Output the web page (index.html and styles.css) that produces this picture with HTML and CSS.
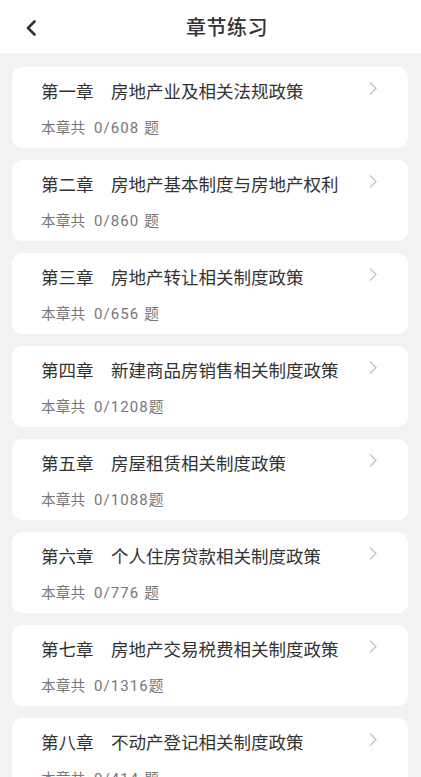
FILE: index.html
```html
<!DOCTYPE html>
<html lang="zh-CN">
<head>
<meta charset="utf-8">
<title>章节练习</title>
<link rel="stylesheet" href="styles.css">
</head>
<body>
<header class="header">
  <div class="back">
    <svg width="12" height="16" viewBox="0 0 12 16"><path d="M9.5 1.5 L3 8 L9.5 14.5" fill="none" stroke="#333" stroke-width="2.6" stroke-linecap="round" stroke-linejoin="round"/></svg>
  </div>
  <h1 class="title">章节练习</h1>
</header>
<main class="list">
  <div class="card"><div class="name">第一章　房地产业及相关法规政策</div><div class="count">本章共<span class="num"> 0/608 </span>题</div><svg class="chev" width="10" height="15" viewBox="0 0 10 15"><path d="M2 1.5 L8 7.5 L2 13.5" fill="none" stroke="#c2c2c2" stroke-width="1.3"/></svg></div>
  <div class="card"><div class="name">第二章　房地产基本制度与房地产权利</div><div class="count">本章共<span class="num"> 0/860 </span>题</div><svg class="chev" width="10" height="15" viewBox="0 0 10 15"><path d="M2 1.5 L8 7.5 L2 13.5" fill="none" stroke="#c2c2c2" stroke-width="1.3"/></svg></div>
  <div class="card"><div class="name">第三章　房地产转让相关制度政策</div><div class="count">本章共<span class="num"> 0/656 </span>题</div><svg class="chev" width="10" height="15" viewBox="0 0 10 15"><path d="M2 1.5 L8 7.5 L2 13.5" fill="none" stroke="#c2c2c2" stroke-width="1.3"/></svg></div>
  <div class="card"><div class="name">第四章　新建商品房销售相关制度政策</div><div class="count">本章共<span class="num"> 0/1208</span>题</div><svg class="chev" width="10" height="15" viewBox="0 0 10 15"><path d="M2 1.5 L8 7.5 L2 13.5" fill="none" stroke="#c2c2c2" stroke-width="1.3"/></svg></div>
  <div class="card"><div class="name">第五章　房屋租赁相关制度政策</div><div class="count">本章共<span class="num"> 0/1088</span>题</div><svg class="chev" width="10" height="15" viewBox="0 0 10 15"><path d="M2 1.5 L8 7.5 L2 13.5" fill="none" stroke="#c2c2c2" stroke-width="1.3"/></svg></div>
  <div class="card"><div class="name">第六章　个人住房贷款相关制度政策</div><div class="count">本章共<span class="num"> 0/776 </span>题</div><svg class="chev" width="10" height="15" viewBox="0 0 10 15"><path d="M2 1.5 L8 7.5 L2 13.5" fill="none" stroke="#c2c2c2" stroke-width="1.3"/></svg></div>
  <div class="card"><div class="name">第七章　房地产交易税费相关制度政策</div><div class="count">本章共<span class="num"> 0/1316</span>题</div><svg class="chev" width="10" height="15" viewBox="0 0 10 15"><path d="M2 1.5 L8 7.5 L2 13.5" fill="none" stroke="#c2c2c2" stroke-width="1.3"/></svg></div>
  <div class="card"><div class="name">第八章　不动产登记相关制度政策</div><div class="count">本章共<span class="num"> 0/414 </span>题</div><svg class="chev" width="10" height="15" viewBox="0 0 10 15"><path d="M2 1.5 L8 7.5 L2 13.5" fill="none" stroke="#c2c2c2" stroke-width="1.3"/></svg></div>
</main>
</body>
</html>
```
FILE: styles.css
```css
html, body {
  margin: 0;
  padding: 0;
}
body {
  background: #f2f2f2;
  font-family: "Noto Sans CJK SC", "Noto Sans", sans-serif;
  width: 421px;
  height: 777px;
  overflow: hidden;
}
.header {
  height: 53px;
  background: #fff;
  display: flex;
  align-items: center;
}
.back {
  width: 12px;
  height: 16px;
  margin-left: 25px;
  margin-top: 2px;
  display: flex;
}
.title {
  margin: 0 0 0 149px;
  font-size: 20px;
  font-weight: 500;
  color: #333;
  line-height: 28px;
  letter-spacing: 0.5px;
}
.list {
  display: flex;
  flex-direction: column;
  gap: 12px;
  padding: 14px 13px 0 12px;
}
.card {
  position: relative;
  background: #fff;
  border-radius: 10px;
  height: 81px;
  box-sizing: border-box;
  padding: 12px 0 0 29px;
  flex-shrink: 0;
}
.name {
  font-size: 17.5px;
  line-height: 24px;
  color: #333;
}
.count {
  margin-top: 14px;
  font-size: 14.7px;
  line-height: 20px;
  color: #777;
}
.num {
  font-family: Roboto, "Noto Sans CJK SC", sans-serif;
  font-size: 15px;
  letter-spacing: 1.1px;
  padding-left: 4px;
}
.chev {
  position: absolute;
  right: 30px;
  top: 14px;
}
```
